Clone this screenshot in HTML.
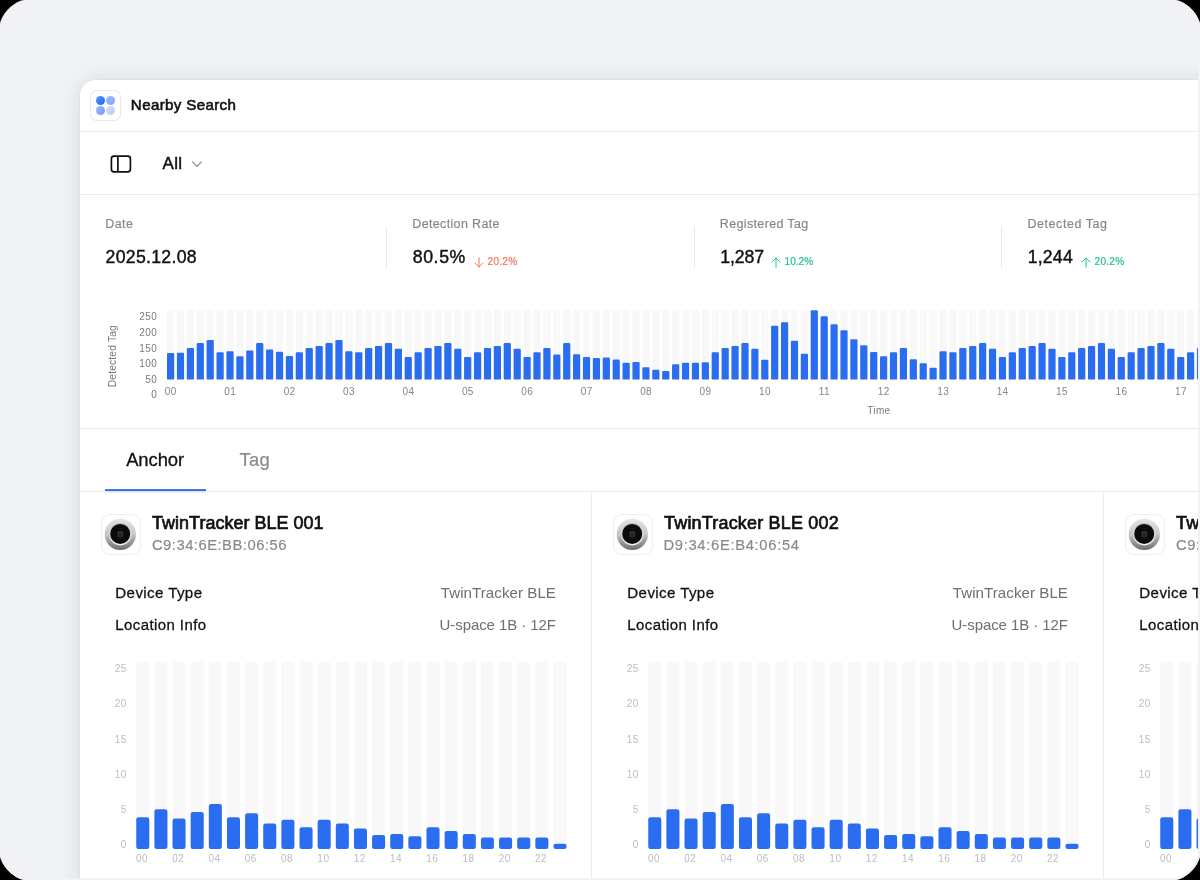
<!DOCTYPE html>
<html lang="en"><head><meta charset="utf-8"><title>Nearby Search</title>
<style>
html,body{margin:0;padding:0;background:#000;}
body{width:1200px;height:880px;overflow:hidden;font-family:"Liberation Sans",sans-serif;}
.frame{position:relative;width:1200px;height:880px;background:#f0f2f6;overflow:hidden;clip-path:polygon(0.00px 24.30px,0.20px 22.86px,0.78px 20.80px,1.75px 18.48px,3.06px 16.03px,4.69px 13.54px,6.61px 11.09px,8.76px 8.76px,11.09px 6.61px,13.54px 4.69px,16.03px 3.06px,18.48px 1.75px,20.80px 0.78px,22.86px 0.20px,24.30px 0.00px,1175.70px 0.00px,1177.14px 0.20px,1179.20px 0.78px,1181.52px 1.75px,1183.97px 3.06px,1186.46px 4.69px,1188.91px 6.61px,1191.24px 8.76px,1193.39px 11.09px,1195.31px 13.54px,1196.94px 16.03px,1198.25px 18.48px,1199.22px 20.80px,1199.80px 22.86px,1200.00px 24.30px,1200.00px 855.70px,1199.80px 857.14px,1199.22px 859.20px,1198.25px 861.52px,1196.94px 863.97px,1195.31px 866.46px,1193.39px 868.91px,1191.24px 871.24px,1188.91px 873.39px,1186.46px 875.31px,1183.97px 876.94px,1181.52px 878.25px,1179.20px 879.22px,1177.14px 879.80px,1175.70px 880.00px,24.30px 880.00px,22.86px 879.80px,20.80px 879.22px,18.48px 878.25px,16.03px 876.94px,13.54px 875.31px,11.09px 873.39px,8.76px 871.24px,6.61px 868.91px,4.69px 866.46px,3.06px 863.97px,1.75px 861.52px,0.78px 859.20px,0.20px 857.14px,0.00px 855.70px);}
.clip{position:absolute;left:0;top:0;width:1198px;height:878px;overflow:hidden;will-change:transform;}
.card{position:absolute;left:80px;top:80px;width:1140px;height:820px;background:#fff;border-radius:16px 0 0 0;box-shadow:0 0 0 1px rgba(20,25,40,.025),0 1px 22px rgba(20,25,40,.115);}
.t{position:absolute;white-space:nowrap;line-height:1;font-family:"Liberation Sans",sans-serif;}
.r{position:absolute;display:block;}
</style></head><body>
<div class="frame"><div class="clip">
<div class="card"></div>
<svg class="r" style="left:0;top:0" width="1198" height="878" viewBox="0 0 1198 878">
<defs><linearGradient id="rg" x1="0" y1="0" x2="0" y2="1"><stop offset="0" stop-color="#e6e6e6"/><stop offset="0.5" stop-color="#c6c6c6"/><stop offset="1" stop-color="#6c6c6c"/></linearGradient>
<linearGradient id="rh" x1="0" y1="0" x2="0" y2="1"><stop offset="0" stop-color="#c2c2c2"/><stop offset="1" stop-color="#f4f4f4"/></linearGradient></defs>
<rect x="167.00" y="310.30" width="7.20" height="69.30" rx="1.2" fill="#f8f8f9"/>
<rect x="167.00" y="353.03" width="7.20" height="26.57" rx="1.2" fill="#2b6df0"/>
<rect x="176.90" y="310.30" width="7.20" height="69.30" rx="1.2" fill="#f8f8f9"/>
<rect x="176.90" y="352.70" width="7.20" height="26.90" rx="1.2" fill="#2b6df0"/>
<rect x="186.81" y="310.30" width="7.20" height="69.30" rx="1.2" fill="#f8f8f9"/>
<rect x="186.81" y="348.03" width="7.20" height="31.57" rx="1.2" fill="#2b6df0"/>
<rect x="196.71" y="310.30" width="7.20" height="69.30" rx="1.2" fill="#f8f8f9"/>
<rect x="196.71" y="343.03" width="7.20" height="36.57" rx="1.2" fill="#2b6df0"/>
<rect x="206.61" y="310.30" width="7.20" height="69.30" rx="1.2" fill="#f8f8f9"/>
<rect x="206.61" y="340.03" width="7.20" height="39.57" rx="1.2" fill="#2b6df0"/>
<rect x="216.51" y="310.30" width="7.20" height="69.30" rx="1.2" fill="#f8f8f9"/>
<rect x="216.51" y="352.20" width="7.20" height="27.40" rx="1.2" fill="#2b6df0"/>
<rect x="226.42" y="310.30" width="7.20" height="69.30" rx="1.2" fill="#f8f8f9"/>
<rect x="226.42" y="351.37" width="7.20" height="28.23" rx="1.2" fill="#2b6df0"/>
<rect x="236.32" y="310.30" width="7.20" height="69.30" rx="1.2" fill="#f8f8f9"/>
<rect x="236.32" y="356.37" width="7.20" height="23.23" rx="1.2" fill="#2b6df0"/>
<rect x="246.22" y="310.30" width="7.20" height="69.30" rx="1.2" fill="#f8f8f9"/>
<rect x="246.22" y="350.53" width="7.20" height="29.07" rx="1.2" fill="#2b6df0"/>
<rect x="256.13" y="310.30" width="7.20" height="69.30" rx="1.2" fill="#f8f8f9"/>
<rect x="256.13" y="343.03" width="7.20" height="36.57" rx="1.2" fill="#2b6df0"/>
<rect x="266.03" y="310.30" width="7.20" height="69.30" rx="1.2" fill="#f8f8f9"/>
<rect x="266.03" y="349.53" width="7.20" height="30.07" rx="1.2" fill="#2b6df0"/>
<rect x="275.93" y="310.30" width="7.20" height="69.30" rx="1.2" fill="#f8f8f9"/>
<rect x="275.93" y="351.87" width="7.20" height="27.73" rx="1.2" fill="#2b6df0"/>
<rect x="285.84" y="310.30" width="7.20" height="69.30" rx="1.2" fill="#f8f8f9"/>
<rect x="285.84" y="356.03" width="7.20" height="23.57" rx="1.2" fill="#2b6df0"/>
<rect x="295.74" y="310.30" width="7.20" height="69.30" rx="1.2" fill="#f8f8f9"/>
<rect x="295.74" y="352.20" width="7.20" height="27.40" rx="1.2" fill="#2b6df0"/>
<rect x="305.64" y="310.30" width="7.20" height="69.30" rx="1.2" fill="#f8f8f9"/>
<rect x="305.64" y="348.03" width="7.20" height="31.57" rx="1.2" fill="#2b6df0"/>
<rect x="315.55" y="310.30" width="7.20" height="69.30" rx="1.2" fill="#f8f8f9"/>
<rect x="315.55" y="346.03" width="7.20" height="33.57" rx="1.2" fill="#2b6df0"/>
<rect x="325.45" y="310.30" width="7.20" height="69.30" rx="1.2" fill="#f8f8f9"/>
<rect x="325.45" y="343.03" width="7.20" height="36.57" rx="1.2" fill="#2b6df0"/>
<rect x="335.35" y="310.30" width="7.20" height="69.30" rx="1.2" fill="#f8f8f9"/>
<rect x="335.35" y="340.03" width="7.20" height="39.57" rx="1.2" fill="#2b6df0"/>
<rect x="345.25" y="310.30" width="7.20" height="69.30" rx="1.2" fill="#f8f8f9"/>
<rect x="345.25" y="351.37" width="7.20" height="28.23" rx="1.2" fill="#2b6df0"/>
<rect x="355.16" y="310.30" width="7.20" height="69.30" rx="1.2" fill="#f8f8f9"/>
<rect x="355.16" y="352.20" width="7.20" height="27.40" rx="1.2" fill="#2b6df0"/>
<rect x="365.06" y="310.30" width="7.20" height="69.30" rx="1.2" fill="#f8f8f9"/>
<rect x="365.06" y="348.03" width="7.20" height="31.57" rx="1.2" fill="#2b6df0"/>
<rect x="374.96" y="310.30" width="7.20" height="69.30" rx="1.2" fill="#f8f8f9"/>
<rect x="374.96" y="346.03" width="7.20" height="33.57" rx="1.2" fill="#2b6df0"/>
<rect x="384.87" y="310.30" width="7.20" height="69.30" rx="1.2" fill="#f8f8f9"/>
<rect x="384.87" y="343.03" width="7.20" height="36.57" rx="1.2" fill="#2b6df0"/>
<rect x="394.77" y="310.30" width="7.20" height="69.30" rx="1.2" fill="#f8f8f9"/>
<rect x="394.77" y="348.70" width="7.20" height="30.90" rx="1.2" fill="#2b6df0"/>
<rect x="404.67" y="310.30" width="7.20" height="69.30" rx="1.2" fill="#f8f8f9"/>
<rect x="404.67" y="357.03" width="7.20" height="22.57" rx="1.2" fill="#2b6df0"/>
<rect x="414.58" y="310.30" width="7.20" height="69.30" rx="1.2" fill="#f8f8f9"/>
<rect x="414.58" y="352.20" width="7.20" height="27.40" rx="1.2" fill="#2b6df0"/>
<rect x="424.48" y="310.30" width="7.20" height="69.30" rx="1.2" fill="#f8f8f9"/>
<rect x="424.48" y="348.03" width="7.20" height="31.57" rx="1.2" fill="#2b6df0"/>
<rect x="434.38" y="310.30" width="7.20" height="69.30" rx="1.2" fill="#f8f8f9"/>
<rect x="434.38" y="346.03" width="7.20" height="33.57" rx="1.2" fill="#2b6df0"/>
<rect x="444.28" y="310.30" width="7.20" height="69.30" rx="1.2" fill="#f8f8f9"/>
<rect x="444.28" y="343.03" width="7.20" height="36.57" rx="1.2" fill="#2b6df0"/>
<rect x="454.19" y="310.30" width="7.20" height="69.30" rx="1.2" fill="#f8f8f9"/>
<rect x="454.19" y="348.70" width="7.20" height="30.90" rx="1.2" fill="#2b6df0"/>
<rect x="464.09" y="310.30" width="7.20" height="69.30" rx="1.2" fill="#f8f8f9"/>
<rect x="464.09" y="357.03" width="7.20" height="22.57" rx="1.2" fill="#2b6df0"/>
<rect x="473.99" y="310.30" width="7.20" height="69.30" rx="1.2" fill="#f8f8f9"/>
<rect x="473.99" y="352.20" width="7.20" height="27.40" rx="1.2" fill="#2b6df0"/>
<rect x="483.90" y="310.30" width="7.20" height="69.30" rx="1.2" fill="#f8f8f9"/>
<rect x="483.90" y="348.03" width="7.20" height="31.57" rx="1.2" fill="#2b6df0"/>
<rect x="493.80" y="310.30" width="7.20" height="69.30" rx="1.2" fill="#f8f8f9"/>
<rect x="493.80" y="346.03" width="7.20" height="33.57" rx="1.2" fill="#2b6df0"/>
<rect x="503.70" y="310.30" width="7.20" height="69.30" rx="1.2" fill="#f8f8f9"/>
<rect x="503.70" y="343.03" width="7.20" height="36.57" rx="1.2" fill="#2b6df0"/>
<rect x="513.61" y="310.30" width="7.20" height="69.30" rx="1.2" fill="#f8f8f9"/>
<rect x="513.61" y="348.70" width="7.20" height="30.90" rx="1.2" fill="#2b6df0"/>
<rect x="523.51" y="310.30" width="7.20" height="69.30" rx="1.2" fill="#f8f8f9"/>
<rect x="523.51" y="357.03" width="7.20" height="22.57" rx="1.2" fill="#2b6df0"/>
<rect x="533.41" y="310.30" width="7.20" height="69.30" rx="1.2" fill="#f8f8f9"/>
<rect x="533.41" y="352.20" width="7.20" height="27.40" rx="1.2" fill="#2b6df0"/>
<rect x="543.31" y="310.30" width="7.20" height="69.30" rx="1.2" fill="#f8f8f9"/>
<rect x="543.31" y="348.03" width="7.20" height="31.57" rx="1.2" fill="#2b6df0"/>
<rect x="553.22" y="310.30" width="7.20" height="69.30" rx="1.2" fill="#f8f8f9"/>
<rect x="553.22" y="354.53" width="7.20" height="25.07" rx="1.2" fill="#2b6df0"/>
<rect x="563.12" y="310.30" width="7.20" height="69.30" rx="1.2" fill="#f8f8f9"/>
<rect x="563.12" y="343.03" width="7.20" height="36.57" rx="1.2" fill="#2b6df0"/>
<rect x="573.02" y="310.30" width="7.20" height="69.30" rx="1.2" fill="#f8f8f9"/>
<rect x="573.02" y="354.20" width="7.20" height="25.40" rx="1.2" fill="#2b6df0"/>
<rect x="582.93" y="310.30" width="7.20" height="69.30" rx="1.2" fill="#f8f8f9"/>
<rect x="582.93" y="357.03" width="7.20" height="22.57" rx="1.2" fill="#2b6df0"/>
<rect x="592.83" y="310.30" width="7.20" height="69.30" rx="1.2" fill="#f8f8f9"/>
<rect x="592.83" y="358.03" width="7.20" height="21.57" rx="1.2" fill="#2b6df0"/>
<rect x="602.73" y="310.30" width="7.20" height="69.30" rx="1.2" fill="#f8f8f9"/>
<rect x="602.73" y="357.53" width="7.20" height="22.07" rx="1.2" fill="#2b6df0"/>
<rect x="612.63" y="310.30" width="7.20" height="69.30" rx="1.2" fill="#f8f8f9"/>
<rect x="612.63" y="359.53" width="7.20" height="20.07" rx="1.2" fill="#2b6df0"/>
<rect x="622.54" y="310.30" width="7.20" height="69.30" rx="1.2" fill="#f8f8f9"/>
<rect x="622.54" y="362.70" width="7.20" height="16.90" rx="1.2" fill="#2b6df0"/>
<rect x="632.44" y="310.30" width="7.20" height="69.30" rx="1.2" fill="#f8f8f9"/>
<rect x="632.44" y="362.03" width="7.20" height="17.57" rx="1.2" fill="#2b6df0"/>
<rect x="642.34" y="310.30" width="7.20" height="69.30" rx="1.2" fill="#f8f8f9"/>
<rect x="642.34" y="367.20" width="7.20" height="12.40" rx="1.2" fill="#2b6df0"/>
<rect x="652.25" y="310.30" width="7.20" height="69.30" rx="1.2" fill="#f8f8f9"/>
<rect x="652.25" y="369.70" width="7.20" height="9.90" rx="1.2" fill="#2b6df0"/>
<rect x="662.15" y="310.30" width="7.20" height="69.30" rx="1.2" fill="#f8f8f9"/>
<rect x="662.15" y="371.03" width="7.20" height="8.57" rx="1.2" fill="#2b6df0"/>
<rect x="672.05" y="310.30" width="7.20" height="69.30" rx="1.2" fill="#f8f8f9"/>
<rect x="672.05" y="364.20" width="7.20" height="15.40" rx="1.2" fill="#2b6df0"/>
<rect x="681.96" y="310.30" width="7.20" height="69.30" rx="1.2" fill="#f8f8f9"/>
<rect x="681.96" y="362.70" width="7.20" height="16.90" rx="1.2" fill="#2b6df0"/>
<rect x="691.86" y="310.30" width="7.20" height="69.30" rx="1.2" fill="#f8f8f9"/>
<rect x="691.86" y="362.70" width="7.20" height="16.90" rx="1.2" fill="#2b6df0"/>
<rect x="701.76" y="310.30" width="7.20" height="69.30" rx="1.2" fill="#f8f8f9"/>
<rect x="701.76" y="362.20" width="7.20" height="17.40" rx="1.2" fill="#2b6df0"/>
<rect x="711.67" y="310.30" width="7.20" height="69.30" rx="1.2" fill="#f8f8f9"/>
<rect x="711.67" y="352.20" width="7.20" height="27.40" rx="1.2" fill="#2b6df0"/>
<rect x="721.57" y="310.30" width="7.20" height="69.30" rx="1.2" fill="#f8f8f9"/>
<rect x="721.57" y="348.03" width="7.20" height="31.57" rx="1.2" fill="#2b6df0"/>
<rect x="731.47" y="310.30" width="7.20" height="69.30" rx="1.2" fill="#f8f8f9"/>
<rect x="731.47" y="346.03" width="7.20" height="33.57" rx="1.2" fill="#2b6df0"/>
<rect x="741.37" y="310.30" width="7.20" height="69.30" rx="1.2" fill="#f8f8f9"/>
<rect x="741.37" y="343.03" width="7.20" height="36.57" rx="1.2" fill="#2b6df0"/>
<rect x="751.28" y="310.30" width="7.20" height="69.30" rx="1.2" fill="#f8f8f9"/>
<rect x="751.28" y="348.70" width="7.20" height="30.90" rx="1.2" fill="#2b6df0"/>
<rect x="761.18" y="310.30" width="7.20" height="69.30" rx="1.2" fill="#f8f8f9"/>
<rect x="761.18" y="359.70" width="7.20" height="19.90" rx="1.2" fill="#2b6df0"/>
<rect x="771.08" y="310.30" width="7.20" height="69.30" rx="1.2" fill="#f8f8f9"/>
<rect x="771.08" y="325.70" width="7.20" height="53.90" rx="1.2" fill="#2b6df0"/>
<rect x="780.99" y="310.30" width="7.20" height="69.30" rx="1.2" fill="#f8f8f9"/>
<rect x="780.99" y="322.20" width="7.20" height="57.40" rx="1.2" fill="#2b6df0"/>
<rect x="790.89" y="310.30" width="7.20" height="69.30" rx="1.2" fill="#f8f8f9"/>
<rect x="790.89" y="340.87" width="7.20" height="38.73" rx="1.2" fill="#2b6df0"/>
<rect x="800.79" y="310.30" width="7.20" height="69.30" rx="1.2" fill="#f8f8f9"/>
<rect x="800.79" y="353.70" width="7.20" height="25.90" rx="1.2" fill="#2b6df0"/>
<rect x="810.70" y="310.30" width="7.20" height="69.30" rx="1.2" fill="#f8f8f9"/>
<rect x="810.70" y="310.37" width="7.20" height="69.23" rx="1.2" fill="#2b6df0"/>
<rect x="820.60" y="310.30" width="7.20" height="69.30" rx="1.2" fill="#f8f8f9"/>
<rect x="820.60" y="316.20" width="7.20" height="63.40" rx="1.2" fill="#2b6df0"/>
<rect x="830.50" y="310.30" width="7.20" height="69.30" rx="1.2" fill="#f8f8f9"/>
<rect x="830.50" y="324.37" width="7.20" height="55.23" rx="1.2" fill="#2b6df0"/>
<rect x="840.40" y="310.30" width="7.20" height="69.30" rx="1.2" fill="#f8f8f9"/>
<rect x="840.40" y="330.37" width="7.20" height="49.23" rx="1.2" fill="#2b6df0"/>
<rect x="850.31" y="310.30" width="7.20" height="69.30" rx="1.2" fill="#f8f8f9"/>
<rect x="850.31" y="339.37" width="7.20" height="40.23" rx="1.2" fill="#2b6df0"/>
<rect x="860.21" y="310.30" width="7.20" height="69.30" rx="1.2" fill="#f8f8f9"/>
<rect x="860.21" y="345.20" width="7.20" height="34.40" rx="1.2" fill="#2b6df0"/>
<rect x="870.11" y="310.30" width="7.20" height="69.30" rx="1.2" fill="#f8f8f9"/>
<rect x="870.11" y="352.03" width="7.20" height="27.57" rx="1.2" fill="#2b6df0"/>
<rect x="880.02" y="310.30" width="7.20" height="69.30" rx="1.2" fill="#f8f8f9"/>
<rect x="880.02" y="356.20" width="7.20" height="23.40" rx="1.2" fill="#2b6df0"/>
<rect x="889.92" y="310.30" width="7.20" height="69.30" rx="1.2" fill="#f8f8f9"/>
<rect x="889.92" y="352.20" width="7.20" height="27.40" rx="1.2" fill="#2b6df0"/>
<rect x="899.82" y="310.30" width="7.20" height="69.30" rx="1.2" fill="#f8f8f9"/>
<rect x="899.82" y="348.03" width="7.20" height="31.57" rx="1.2" fill="#2b6df0"/>
<rect x="909.73" y="310.30" width="7.20" height="69.30" rx="1.2" fill="#f8f8f9"/>
<rect x="909.73" y="359.37" width="7.20" height="20.23" rx="1.2" fill="#2b6df0"/>
<rect x="919.63" y="310.30" width="7.20" height="69.30" rx="1.2" fill="#f8f8f9"/>
<rect x="919.63" y="363.20" width="7.20" height="16.40" rx="1.2" fill="#2b6df0"/>
<rect x="929.53" y="310.30" width="7.20" height="69.30" rx="1.2" fill="#f8f8f9"/>
<rect x="929.53" y="367.70" width="7.20" height="11.90" rx="1.2" fill="#2b6df0"/>
<rect x="939.43" y="310.30" width="7.20" height="69.30" rx="1.2" fill="#f8f8f9"/>
<rect x="939.43" y="351.37" width="7.20" height="28.23" rx="1.2" fill="#2b6df0"/>
<rect x="949.34" y="310.30" width="7.20" height="69.30" rx="1.2" fill="#f8f8f9"/>
<rect x="949.34" y="352.20" width="7.20" height="27.40" rx="1.2" fill="#2b6df0"/>
<rect x="959.24" y="310.30" width="7.20" height="69.30" rx="1.2" fill="#f8f8f9"/>
<rect x="959.24" y="348.03" width="7.20" height="31.57" rx="1.2" fill="#2b6df0"/>
<rect x="969.14" y="310.30" width="7.20" height="69.30" rx="1.2" fill="#f8f8f9"/>
<rect x="969.14" y="346.03" width="7.20" height="33.57" rx="1.2" fill="#2b6df0"/>
<rect x="979.05" y="310.30" width="7.20" height="69.30" rx="1.2" fill="#f8f8f9"/>
<rect x="979.05" y="343.03" width="7.20" height="36.57" rx="1.2" fill="#2b6df0"/>
<rect x="988.95" y="310.30" width="7.20" height="69.30" rx="1.2" fill="#f8f8f9"/>
<rect x="988.95" y="348.70" width="7.20" height="30.90" rx="1.2" fill="#2b6df0"/>
<rect x="998.85" y="310.30" width="7.20" height="69.30" rx="1.2" fill="#f8f8f9"/>
<rect x="998.85" y="357.03" width="7.20" height="22.57" rx="1.2" fill="#2b6df0"/>
<rect x="1008.75" y="310.30" width="7.20" height="69.30" rx="1.2" fill="#f8f8f9"/>
<rect x="1008.75" y="352.20" width="7.20" height="27.40" rx="1.2" fill="#2b6df0"/>
<rect x="1018.66" y="310.30" width="7.20" height="69.30" rx="1.2" fill="#f8f8f9"/>
<rect x="1018.66" y="348.03" width="7.20" height="31.57" rx="1.2" fill="#2b6df0"/>
<rect x="1028.56" y="310.30" width="7.20" height="69.30" rx="1.2" fill="#f8f8f9"/>
<rect x="1028.56" y="346.03" width="7.20" height="33.57" rx="1.2" fill="#2b6df0"/>
<rect x="1038.46" y="310.30" width="7.20" height="69.30" rx="1.2" fill="#f8f8f9"/>
<rect x="1038.46" y="343.03" width="7.20" height="36.57" rx="1.2" fill="#2b6df0"/>
<rect x="1048.37" y="310.30" width="7.20" height="69.30" rx="1.2" fill="#f8f8f9"/>
<rect x="1048.37" y="348.70" width="7.20" height="30.90" rx="1.2" fill="#2b6df0"/>
<rect x="1058.27" y="310.30" width="7.20" height="69.30" rx="1.2" fill="#f8f8f9"/>
<rect x="1058.27" y="357.03" width="7.20" height="22.57" rx="1.2" fill="#2b6df0"/>
<rect x="1068.17" y="310.30" width="7.20" height="69.30" rx="1.2" fill="#f8f8f9"/>
<rect x="1068.17" y="352.20" width="7.20" height="27.40" rx="1.2" fill="#2b6df0"/>
<rect x="1078.08" y="310.30" width="7.20" height="69.30" rx="1.2" fill="#f8f8f9"/>
<rect x="1078.08" y="348.03" width="7.20" height="31.57" rx="1.2" fill="#2b6df0"/>
<rect x="1087.98" y="310.30" width="7.20" height="69.30" rx="1.2" fill="#f8f8f9"/>
<rect x="1087.98" y="346.03" width="7.20" height="33.57" rx="1.2" fill="#2b6df0"/>
<rect x="1097.88" y="310.30" width="7.20" height="69.30" rx="1.2" fill="#f8f8f9"/>
<rect x="1097.88" y="343.03" width="7.20" height="36.57" rx="1.2" fill="#2b6df0"/>
<rect x="1107.79" y="310.30" width="7.20" height="69.30" rx="1.2" fill="#f8f8f9"/>
<rect x="1107.79" y="348.70" width="7.20" height="30.90" rx="1.2" fill="#2b6df0"/>
<rect x="1117.69" y="310.30" width="7.20" height="69.30" rx="1.2" fill="#f8f8f9"/>
<rect x="1117.69" y="357.03" width="7.20" height="22.57" rx="1.2" fill="#2b6df0"/>
<rect x="1127.59" y="310.30" width="7.20" height="69.30" rx="1.2" fill="#f8f8f9"/>
<rect x="1127.59" y="352.20" width="7.20" height="27.40" rx="1.2" fill="#2b6df0"/>
<rect x="1137.49" y="310.30" width="7.20" height="69.30" rx="1.2" fill="#f8f8f9"/>
<rect x="1137.49" y="348.03" width="7.20" height="31.57" rx="1.2" fill="#2b6df0"/>
<rect x="1147.40" y="310.30" width="7.20" height="69.30" rx="1.2" fill="#f8f8f9"/>
<rect x="1147.40" y="346.03" width="7.20" height="33.57" rx="1.2" fill="#2b6df0"/>
<rect x="1157.30" y="310.30" width="7.20" height="69.30" rx="1.2" fill="#f8f8f9"/>
<rect x="1157.30" y="343.03" width="7.20" height="36.57" rx="1.2" fill="#2b6df0"/>
<rect x="1167.20" y="310.30" width="7.20" height="69.30" rx="1.2" fill="#f8f8f9"/>
<rect x="1167.20" y="348.70" width="7.20" height="30.90" rx="1.2" fill="#2b6df0"/>
<rect x="1177.11" y="310.30" width="7.20" height="69.30" rx="1.2" fill="#f8f8f9"/>
<rect x="1177.11" y="357.03" width="7.20" height="22.57" rx="1.2" fill="#2b6df0"/>
<rect x="1187.01" y="310.30" width="7.20" height="69.30" rx="1.2" fill="#f8f8f9"/>
<rect x="1187.01" y="352.20" width="7.20" height="27.40" rx="1.2" fill="#2b6df0"/>
<rect x="1196.91" y="310.30" width="7.20" height="69.30" rx="1.2" fill="#f8f8f9"/>
<rect x="1196.91" y="348.03" width="7.20" height="31.57" rx="1.2" fill="#2b6df0"/>
<rect x="1206.82" y="310.30" width="7.20" height="69.30" rx="1.2" fill="#f8f8f9"/>
<rect x="1206.82" y="346.03" width="7.20" height="33.57" rx="1.2" fill="#2b6df0"/>
<rect x="1216.72" y="310.30" width="7.20" height="69.30" rx="1.2" fill="#f8f8f9"/>
<rect x="1216.72" y="343.03" width="7.20" height="36.57" rx="1.2" fill="#2b6df0"/>
<rect x="1226.62" y="310.30" width="7.20" height="69.30" rx="1.2" fill="#f8f8f9"/>
<rect x="1226.62" y="348.70" width="7.20" height="30.90" rx="1.2" fill="#2b6df0"/>
<rect x="105.00" y="489.20" width="101.00" height="2.90" rx="0" fill="#2467ee"/>
<g transform="translate(0,0)">
<rect x="101.4" y="514.6" width="39" height="39.8" rx="8.5" fill="#fff" stroke="#ededee" stroke-width="1"/>
<circle cx="120.3" cy="534.4" r="15.6" fill="url(#rg)"/>
<circle cx="120.3" cy="534.1" r="11.3" fill="url(#rh)"/>
<circle cx="120.2" cy="533.9" r="10" fill="#0b0b0c"/>
<rect x="117.7" y="531.4" width="5.2" height="5.4" rx="0.5" fill="#3b3b3b"/>
<rect x="118.9" y="533.2" width="2.8" height="2.4" fill="#161616"/>
<rect x="119.2" y="528.4" width="2" height="0.8" fill="#222"/>
<rect x="118.6" y="538.4" width="3.2" height="0.8" fill="#222"/>
</g>
<rect x="136.25" y="662.10" width="13.05" height="187.00" rx="2.3" fill="#f8f8f9"/>
<rect x="136.25" y="817.20" width="13.05" height="31.90" rx="2.3" fill="#2b6df0"/>
<rect x="154.39" y="662.10" width="13.05" height="187.00" rx="2.3" fill="#f8f8f9"/>
<rect x="154.39" y="809.30" width="13.05" height="39.80" rx="2.3" fill="#2b6df0"/>
<rect x="172.53" y="662.10" width="13.05" height="187.00" rx="2.3" fill="#f8f8f9"/>
<rect x="172.53" y="818.50" width="13.05" height="30.60" rx="2.3" fill="#2b6df0"/>
<rect x="190.67" y="662.10" width="13.05" height="187.00" rx="2.3" fill="#f8f8f9"/>
<rect x="190.67" y="811.90" width="13.05" height="37.20" rx="2.3" fill="#2b6df0"/>
<rect x="208.81" y="662.10" width="13.05" height="187.00" rx="2.3" fill="#f8f8f9"/>
<rect x="208.81" y="804.10" width="13.05" height="45.00" rx="2.3" fill="#2b6df0"/>
<rect x="226.95" y="662.10" width="13.05" height="187.00" rx="2.3" fill="#f8f8f9"/>
<rect x="226.95" y="817.20" width="13.05" height="31.90" rx="2.3" fill="#2b6df0"/>
<rect x="245.09" y="662.10" width="13.05" height="187.00" rx="2.3" fill="#f8f8f9"/>
<rect x="245.09" y="813.20" width="13.05" height="35.90" rx="2.3" fill="#2b6df0"/>
<rect x="263.23" y="662.10" width="13.05" height="187.00" rx="2.3" fill="#f8f8f9"/>
<rect x="263.23" y="823.40" width="13.05" height="25.70" rx="2.3" fill="#2b6df0"/>
<rect x="281.37" y="662.10" width="13.05" height="187.00" rx="2.3" fill="#f8f8f9"/>
<rect x="281.37" y="819.80" width="13.05" height="29.30" rx="2.3" fill="#2b6df0"/>
<rect x="299.51" y="662.10" width="13.05" height="187.00" rx="2.3" fill="#f8f8f9"/>
<rect x="299.51" y="827.30" width="13.05" height="21.80" rx="2.3" fill="#2b6df0"/>
<rect x="317.65" y="662.10" width="13.05" height="187.00" rx="2.3" fill="#f8f8f9"/>
<rect x="317.65" y="819.80" width="13.05" height="29.30" rx="2.3" fill="#2b6df0"/>
<rect x="335.79" y="662.10" width="13.05" height="187.00" rx="2.3" fill="#f8f8f9"/>
<rect x="335.79" y="823.40" width="13.05" height="25.70" rx="2.3" fill="#2b6df0"/>
<rect x="353.93" y="662.10" width="13.05" height="187.00" rx="2.3" fill="#f8f8f9"/>
<rect x="353.93" y="828.60" width="13.05" height="20.50" rx="2.3" fill="#2b6df0"/>
<rect x="372.07" y="662.10" width="13.05" height="187.00" rx="2.3" fill="#f8f8f9"/>
<rect x="372.07" y="834.90" width="13.05" height="14.20" rx="2.3" fill="#2b6df0"/>
<rect x="390.21" y="662.10" width="13.05" height="187.00" rx="2.3" fill="#f8f8f9"/>
<rect x="390.21" y="833.90" width="13.05" height="15.20" rx="2.3" fill="#2b6df0"/>
<rect x="408.35" y="662.10" width="13.05" height="187.00" rx="2.3" fill="#f8f8f9"/>
<rect x="408.35" y="836.20" width="13.05" height="12.90" rx="2.3" fill="#2b6df0"/>
<rect x="426.49" y="662.10" width="13.05" height="187.00" rx="2.3" fill="#f8f8f9"/>
<rect x="426.49" y="827.30" width="13.05" height="21.80" rx="2.3" fill="#2b6df0"/>
<rect x="444.63" y="662.10" width="13.05" height="187.00" rx="2.3" fill="#f8f8f9"/>
<rect x="444.63" y="831.00" width="13.05" height="18.10" rx="2.3" fill="#2b6df0"/>
<rect x="462.77" y="662.10" width="13.05" height="187.00" rx="2.3" fill="#f8f8f9"/>
<rect x="462.77" y="833.90" width="13.05" height="15.20" rx="2.3" fill="#2b6df0"/>
<rect x="480.91" y="662.10" width="13.05" height="187.00" rx="2.3" fill="#f8f8f9"/>
<rect x="480.91" y="837.50" width="13.05" height="11.60" rx="2.3" fill="#2b6df0"/>
<rect x="499.05" y="662.10" width="13.05" height="187.00" rx="2.3" fill="#f8f8f9"/>
<rect x="499.05" y="837.50" width="13.05" height="11.60" rx="2.3" fill="#2b6df0"/>
<rect x="517.19" y="662.10" width="13.05" height="187.00" rx="2.3" fill="#f8f8f9"/>
<rect x="517.19" y="837.50" width="13.05" height="11.60" rx="2.3" fill="#2b6df0"/>
<rect x="535.33" y="662.10" width="13.05" height="187.00" rx="2.3" fill="#f8f8f9"/>
<rect x="535.33" y="837.50" width="13.05" height="11.60" rx="2.3" fill="#2b6df0"/>
<rect x="553.47" y="662.10" width="13.05" height="187.00" rx="2.3" fill="#f8f8f9"/>
<rect x="553.47" y="843.80" width="13.05" height="5.30" rx="2.3" fill="#2b6df0"/>
<g transform="translate(512,0)">
<rect x="101.4" y="514.6" width="39" height="39.8" rx="8.5" fill="#fff" stroke="#ededee" stroke-width="1"/>
<circle cx="120.3" cy="534.4" r="15.6" fill="url(#rg)"/>
<circle cx="120.3" cy="534.1" r="11.3" fill="url(#rh)"/>
<circle cx="120.2" cy="533.9" r="10" fill="#0b0b0c"/>
<rect x="117.7" y="531.4" width="5.2" height="5.4" rx="0.5" fill="#3b3b3b"/>
<rect x="118.9" y="533.2" width="2.8" height="2.4" fill="#161616"/>
<rect x="119.2" y="528.4" width="2" height="0.8" fill="#222"/>
<rect x="118.6" y="538.4" width="3.2" height="0.8" fill="#222"/>
</g>
<rect x="648.25" y="662.10" width="13.05" height="187.00" rx="2.3" fill="#f8f8f9"/>
<rect x="648.25" y="817.20" width="13.05" height="31.90" rx="2.3" fill="#2b6df0"/>
<rect x="666.39" y="662.10" width="13.05" height="187.00" rx="2.3" fill="#f8f8f9"/>
<rect x="666.39" y="809.30" width="13.05" height="39.80" rx="2.3" fill="#2b6df0"/>
<rect x="684.53" y="662.10" width="13.05" height="187.00" rx="2.3" fill="#f8f8f9"/>
<rect x="684.53" y="818.50" width="13.05" height="30.60" rx="2.3" fill="#2b6df0"/>
<rect x="702.67" y="662.10" width="13.05" height="187.00" rx="2.3" fill="#f8f8f9"/>
<rect x="702.67" y="811.90" width="13.05" height="37.20" rx="2.3" fill="#2b6df0"/>
<rect x="720.81" y="662.10" width="13.05" height="187.00" rx="2.3" fill="#f8f8f9"/>
<rect x="720.81" y="804.10" width="13.05" height="45.00" rx="2.3" fill="#2b6df0"/>
<rect x="738.95" y="662.10" width="13.05" height="187.00" rx="2.3" fill="#f8f8f9"/>
<rect x="738.95" y="817.20" width="13.05" height="31.90" rx="2.3" fill="#2b6df0"/>
<rect x="757.09" y="662.10" width="13.05" height="187.00" rx="2.3" fill="#f8f8f9"/>
<rect x="757.09" y="813.20" width="13.05" height="35.90" rx="2.3" fill="#2b6df0"/>
<rect x="775.23" y="662.10" width="13.05" height="187.00" rx="2.3" fill="#f8f8f9"/>
<rect x="775.23" y="823.40" width="13.05" height="25.70" rx="2.3" fill="#2b6df0"/>
<rect x="793.37" y="662.10" width="13.05" height="187.00" rx="2.3" fill="#f8f8f9"/>
<rect x="793.37" y="819.80" width="13.05" height="29.30" rx="2.3" fill="#2b6df0"/>
<rect x="811.51" y="662.10" width="13.05" height="187.00" rx="2.3" fill="#f8f8f9"/>
<rect x="811.51" y="827.30" width="13.05" height="21.80" rx="2.3" fill="#2b6df0"/>
<rect x="829.65" y="662.10" width="13.05" height="187.00" rx="2.3" fill="#f8f8f9"/>
<rect x="829.65" y="819.80" width="13.05" height="29.30" rx="2.3" fill="#2b6df0"/>
<rect x="847.79" y="662.10" width="13.05" height="187.00" rx="2.3" fill="#f8f8f9"/>
<rect x="847.79" y="823.40" width="13.05" height="25.70" rx="2.3" fill="#2b6df0"/>
<rect x="865.93" y="662.10" width="13.05" height="187.00" rx="2.3" fill="#f8f8f9"/>
<rect x="865.93" y="828.60" width="13.05" height="20.50" rx="2.3" fill="#2b6df0"/>
<rect x="884.07" y="662.10" width="13.05" height="187.00" rx="2.3" fill="#f8f8f9"/>
<rect x="884.07" y="834.90" width="13.05" height="14.20" rx="2.3" fill="#2b6df0"/>
<rect x="902.21" y="662.10" width="13.05" height="187.00" rx="2.3" fill="#f8f8f9"/>
<rect x="902.21" y="833.90" width="13.05" height="15.20" rx="2.3" fill="#2b6df0"/>
<rect x="920.35" y="662.10" width="13.05" height="187.00" rx="2.3" fill="#f8f8f9"/>
<rect x="920.35" y="836.20" width="13.05" height="12.90" rx="2.3" fill="#2b6df0"/>
<rect x="938.49" y="662.10" width="13.05" height="187.00" rx="2.3" fill="#f8f8f9"/>
<rect x="938.49" y="827.30" width="13.05" height="21.80" rx="2.3" fill="#2b6df0"/>
<rect x="956.63" y="662.10" width="13.05" height="187.00" rx="2.3" fill="#f8f8f9"/>
<rect x="956.63" y="831.00" width="13.05" height="18.10" rx="2.3" fill="#2b6df0"/>
<rect x="974.77" y="662.10" width="13.05" height="187.00" rx="2.3" fill="#f8f8f9"/>
<rect x="974.77" y="833.90" width="13.05" height="15.20" rx="2.3" fill="#2b6df0"/>
<rect x="992.91" y="662.10" width="13.05" height="187.00" rx="2.3" fill="#f8f8f9"/>
<rect x="992.91" y="837.50" width="13.05" height="11.60" rx="2.3" fill="#2b6df0"/>
<rect x="1011.05" y="662.10" width="13.05" height="187.00" rx="2.3" fill="#f8f8f9"/>
<rect x="1011.05" y="837.50" width="13.05" height="11.60" rx="2.3" fill="#2b6df0"/>
<rect x="1029.19" y="662.10" width="13.05" height="187.00" rx="2.3" fill="#f8f8f9"/>
<rect x="1029.19" y="837.50" width="13.05" height="11.60" rx="2.3" fill="#2b6df0"/>
<rect x="1047.33" y="662.10" width="13.05" height="187.00" rx="2.3" fill="#f8f8f9"/>
<rect x="1047.33" y="837.50" width="13.05" height="11.60" rx="2.3" fill="#2b6df0"/>
<rect x="1065.47" y="662.10" width="13.05" height="187.00" rx="2.3" fill="#f8f8f9"/>
<rect x="1065.47" y="843.80" width="13.05" height="5.30" rx="2.3" fill="#2b6df0"/>
<g transform="translate(1024,0)">
<rect x="101.4" y="514.6" width="39" height="39.8" rx="8.5" fill="#fff" stroke="#ededee" stroke-width="1"/>
<circle cx="120.3" cy="534.4" r="15.6" fill="url(#rg)"/>
<circle cx="120.3" cy="534.1" r="11.3" fill="url(#rh)"/>
<circle cx="120.2" cy="533.9" r="10" fill="#0b0b0c"/>
<rect x="117.7" y="531.4" width="5.2" height="5.4" rx="0.5" fill="#3b3b3b"/>
<rect x="118.9" y="533.2" width="2.8" height="2.4" fill="#161616"/>
<rect x="119.2" y="528.4" width="2" height="0.8" fill="#222"/>
<rect x="118.6" y="538.4" width="3.2" height="0.8" fill="#222"/>
</g>
<rect x="1160.25" y="662.10" width="13.05" height="187.00" rx="2.3" fill="#f8f8f9"/>
<rect x="1160.25" y="817.20" width="13.05" height="31.90" rx="2.3" fill="#2b6df0"/>
<rect x="1178.39" y="662.10" width="13.05" height="187.00" rx="2.3" fill="#f8f8f9"/>
<rect x="1178.39" y="809.30" width="13.05" height="39.80" rx="2.3" fill="#2b6df0"/>
<rect x="1196.53" y="662.10" width="13.05" height="187.00" rx="2.3" fill="#f8f8f9"/>
<rect x="1196.53" y="818.50" width="13.05" height="30.60" rx="2.3" fill="#2b6df0"/>
<rect x="1214.67" y="662.10" width="13.05" height="187.00" rx="2.3" fill="#f8f8f9"/>
<rect x="1214.67" y="811.90" width="13.05" height="37.20" rx="2.3" fill="#2b6df0"/>
<rect x="1232.81" y="662.10" width="13.05" height="187.00" rx="2.3" fill="#f8f8f9"/>
<rect x="1232.81" y="804.10" width="13.05" height="45.00" rx="2.3" fill="#2b6df0"/>
<rect x="1250.95" y="662.10" width="13.05" height="187.00" rx="2.3" fill="#f8f8f9"/>
<rect x="1250.95" y="817.20" width="13.05" height="31.90" rx="2.3" fill="#2b6df0"/>
<rect x="1269.09" y="662.10" width="13.05" height="187.00" rx="2.3" fill="#f8f8f9"/>
<rect x="1269.09" y="813.20" width="13.05" height="35.90" rx="2.3" fill="#2b6df0"/>
<rect x="1287.23" y="662.10" width="13.05" height="187.00" rx="2.3" fill="#f8f8f9"/>
<rect x="1287.23" y="823.40" width="13.05" height="25.70" rx="2.3" fill="#2b6df0"/>
<rect x="1305.37" y="662.10" width="13.05" height="187.00" rx="2.3" fill="#f8f8f9"/>
<rect x="1305.37" y="819.80" width="13.05" height="29.30" rx="2.3" fill="#2b6df0"/>
<rect x="1323.51" y="662.10" width="13.05" height="187.00" rx="2.3" fill="#f8f8f9"/>
<rect x="1323.51" y="827.30" width="13.05" height="21.80" rx="2.3" fill="#2b6df0"/>
<rect x="1341.65" y="662.10" width="13.05" height="187.00" rx="2.3" fill="#f8f8f9"/>
<rect x="1341.65" y="819.80" width="13.05" height="29.30" rx="2.3" fill="#2b6df0"/>
<rect x="1359.79" y="662.10" width="13.05" height="187.00" rx="2.3" fill="#f8f8f9"/>
<rect x="1359.79" y="823.40" width="13.05" height="25.70" rx="2.3" fill="#2b6df0"/>
<rect x="1377.93" y="662.10" width="13.05" height="187.00" rx="2.3" fill="#f8f8f9"/>
<rect x="1377.93" y="828.60" width="13.05" height="20.50" rx="2.3" fill="#2b6df0"/>
<rect x="1396.07" y="662.10" width="13.05" height="187.00" rx="2.3" fill="#f8f8f9"/>
<rect x="1396.07" y="834.90" width="13.05" height="14.20" rx="2.3" fill="#2b6df0"/>
<rect x="1414.21" y="662.10" width="13.05" height="187.00" rx="2.3" fill="#f8f8f9"/>
<rect x="1414.21" y="833.90" width="13.05" height="15.20" rx="2.3" fill="#2b6df0"/>
<rect x="1432.35" y="662.10" width="13.05" height="187.00" rx="2.3" fill="#f8f8f9"/>
<rect x="1432.35" y="836.20" width="13.05" height="12.90" rx="2.3" fill="#2b6df0"/>
<rect x="1450.49" y="662.10" width="13.05" height="187.00" rx="2.3" fill="#f8f8f9"/>
<rect x="1450.49" y="827.30" width="13.05" height="21.80" rx="2.3" fill="#2b6df0"/>
<rect x="1468.63" y="662.10" width="13.05" height="187.00" rx="2.3" fill="#f8f8f9"/>
<rect x="1468.63" y="831.00" width="13.05" height="18.10" rx="2.3" fill="#2b6df0"/>
<rect x="1486.77" y="662.10" width="13.05" height="187.00" rx="2.3" fill="#f8f8f9"/>
<rect x="1486.77" y="833.90" width="13.05" height="15.20" rx="2.3" fill="#2b6df0"/>
<rect x="1504.91" y="662.10" width="13.05" height="187.00" rx="2.3" fill="#f8f8f9"/>
<rect x="1504.91" y="837.50" width="13.05" height="11.60" rx="2.3" fill="#2b6df0"/>
<rect x="1523.05" y="662.10" width="13.05" height="187.00" rx="2.3" fill="#f8f8f9"/>
<rect x="1523.05" y="837.50" width="13.05" height="11.60" rx="2.3" fill="#2b6df0"/>
<rect x="1541.19" y="662.10" width="13.05" height="187.00" rx="2.3" fill="#f8f8f9"/>
<rect x="1541.19" y="837.50" width="13.05" height="11.60" rx="2.3" fill="#2b6df0"/>
<rect x="1559.33" y="662.10" width="13.05" height="187.00" rx="2.3" fill="#f8f8f9"/>
<rect x="1559.33" y="837.50" width="13.05" height="11.60" rx="2.3" fill="#2b6df0"/>
<rect x="1577.47" y="662.10" width="13.05" height="187.00" rx="2.3" fill="#f8f8f9"/>
<rect x="1577.47" y="843.80" width="13.05" height="5.30" rx="2.3" fill="#2b6df0"/>
</svg>
<div class="r" style="left:90px;top:90px;width:31px;height:31px;border-radius:7px;background:#fff;box-shadow:0 0 0 1px #e8e8ea inset, 0 1px 1px rgba(0,0,0,.02);"></div>
<svg class="r" style="left:90px;top:90px" width="31" height="31" viewBox="0 0 31 31">
<defs>
<linearGradient id="g1" x1="0" y1="0" x2="1" y2="1"><stop offset="0" stop-color="#4f9bff"/><stop offset="1" stop-color="#2f5cf5"/></linearGradient>
<linearGradient id="g2" x1="0" y1="0" x2="1" y2="1"><stop offset="0" stop-color="#93bdfb"/><stop offset="1" stop-color="#8fa4fb"/></linearGradient>
<linearGradient id="g3" x1="0" y1="0" x2="1" y2="1"><stop offset="0" stop-color="#93c0fb"/><stop offset="1" stop-color="#7f93f8"/></linearGradient>
<linearGradient id="g4" x1="0" y1="0" x2="1" y2="1"><stop offset="0" stop-color="#d3e3fc"/><stop offset="1" stop-color="#bcc8fd"/></linearGradient>
</defs>
<circle cx="10.5" cy="10.5" r="4.5" fill="url(#g1)"/>
<circle cx="20.5" cy="10.5" r="4.5" fill="url(#g2)"/>
<circle cx="10.5" cy="20.5" r="4.5" fill="url(#g3)"/>
<circle cx="20.5" cy="20.5" r="4.5" fill="url(#g4)"/>
</svg>
<div class="t" style="top:97.00px;font-size:15.12px;color:#111;letter-spacing:0.355px;-webkit-text-stroke:0.6px #111;left:130.86px;">Nearby Search</div>
<div class="r" style="left:80.00px;top:131.00px;width:1120.00px;height:1.00px;background:#ececec;"></div>
<svg class="r" style="left:108px;top:152px" width="26" height="24" viewBox="0 0 26 24" fill="none" stroke="#111" stroke-width="1.7">
<rect x="3.4" y="4.2" width="19" height="15.6" rx="2.6"/><line x1="9.9" y1="4.2" x2="9.9" y2="19.8"/></svg>
<div class="t" style="top:156.00px;font-size:16.86px;color:#111;letter-spacing:0.358px;-webkit-text-stroke:0.5px #111;left:162.62px;">All</div>
<svg class="r" style="left:190px;top:158px" width="14" height="12" viewBox="0 0 14 12" fill="none" stroke="#858585" stroke-width="1.1" stroke-linecap="round" stroke-linejoin="round">
<path d="M2.6 3.8 L7 8.4 L11.4 3.8"/></svg>
<div class="r" style="left:80.00px;top:194.00px;width:1120.00px;height:1.00px;background:#ececec;"></div>
<div class="t" style="top:218.00px;font-size:12.5px;color:#858585;letter-spacing:0.442px;-webkit-text-stroke:0.15px #858585;left:105.25px;">Date</div>
<div class="t" style="top:218.00px;font-size:12.5px;color:#858585;letter-spacing:0.345px;-webkit-text-stroke:0.15px #858585;left:412.30px;">Detection Rate</div>
<div class="t" style="top:218.00px;font-size:12.5px;color:#858585;letter-spacing:0.348px;-webkit-text-stroke:0.15px #858585;left:719.85px;">Registered Tag</div>
<div class="t" style="top:218.00px;font-size:12.5px;color:#858585;letter-spacing:0.541px;-webkit-text-stroke:0.15px #858585;left:1027.55px;">Detected Tag</div>
<div class="t" style="top:249.00px;font-size:17.71px;color:#111;letter-spacing:0.276px;-webkit-text-stroke:0.42px #111;left:105.62px;">2025.12.08</div>
<div class="t" style="top:249.00px;font-size:17.71px;color:#111;letter-spacing:0.626px;-webkit-text-stroke:0.42px #111;left:412.70px;">80.5%</div>
<div class="t" style="top:249.00px;font-size:17.71px;color:#111;letter-spacing:-0.125px;-webkit-text-stroke:0.42px #111;left:720.36px;">1,287</div>
<div class="t" style="top:249.00px;font-size:17.71px;color:#111;letter-spacing:0.207px;-webkit-text-stroke:0.42px #111;left:1027.66px;">1,244</div>
<div class="r" style="left:386.00px;top:227.00px;width:1.00px;height:41.00px;background:#e9e9e9;"></div>
<div class="r" style="left:694.00px;top:227.00px;width:1.00px;height:41.00px;background:#e9e9e9;"></div>
<div class="r" style="left:1001.00px;top:227.00px;width:1.00px;height:41.00px;background:#e9e9e9;"></div>
<svg class="r" style="left:473.5px;top:257px" width="10" height="11" viewBox="0 0 10 11" fill="none" stroke="#f4705f" stroke-width="1" stroke-linecap="round" stroke-linejoin="round"><path d="M5 0.8 V10 M1 6 L5 10 L9 6"/></svg>
<div class="t" style="top:257.00px;font-size:10.14px;color:#f4705f;letter-spacing:0.229px;-webkit-text-stroke:0.2px #f4705f;left:487.59px;">20.2%</div>
<svg class="r" style="left:771px;top:257px" width="10" height="11" viewBox="0 0 10 11" fill="none" stroke="#22c48f" stroke-width="1" stroke-linecap="round" stroke-linejoin="round"><path d="M5 10.2 V1 M1 5 L5 1 L9 5"/></svg>
<div class="t" style="top:257.00px;font-size:10.14px;color:#22c48f;letter-spacing:-0.005px;-webkit-text-stroke:0.2px #22c48f;left:784.53px;">10.2%</div>
<svg class="r" style="left:1080.6px;top:257px" width="10" height="11" viewBox="0 0 10 11" fill="none" stroke="#22c48f" stroke-width="1" stroke-linecap="round" stroke-linejoin="round"><path d="M5 10.2 V1 M1 5 L5 1 L9 5"/></svg>
<div class="t" style="top:257.00px;font-size:10.14px;color:#22c48f;letter-spacing:0.229px;-webkit-text-stroke:0.2px #22c48f;left:1094.59px;">20.2%</div>
<div class="t" style="top:387.00px;font-size:10px;color:#858585;letter-spacing:0.4px;left:70.60px;width:200px;text-align:center;text-indent:0.4px;">00</div>
<div class="t" style="top:387.00px;font-size:10px;color:#858585;letter-spacing:0.4px;left:130.02px;width:200px;text-align:center;text-indent:0.4px;">01</div>
<div class="t" style="top:387.00px;font-size:10px;color:#858585;letter-spacing:0.4px;left:189.44px;width:200px;text-align:center;text-indent:0.4px;">02</div>
<div class="t" style="top:387.00px;font-size:10px;color:#858585;letter-spacing:0.4px;left:248.85px;width:200px;text-align:center;text-indent:0.4px;">03</div>
<div class="t" style="top:387.00px;font-size:10px;color:#858585;letter-spacing:0.4px;left:308.27px;width:200px;text-align:center;text-indent:0.4px;">04</div>
<div class="t" style="top:387.00px;font-size:10px;color:#858585;letter-spacing:0.4px;left:367.69px;width:200px;text-align:center;text-indent:0.4px;">05</div>
<div class="t" style="top:387.00px;font-size:10px;color:#858585;letter-spacing:0.4px;left:427.11px;width:200px;text-align:center;text-indent:0.4px;">06</div>
<div class="t" style="top:387.00px;font-size:10px;color:#858585;letter-spacing:0.4px;left:486.53px;width:200px;text-align:center;text-indent:0.4px;">07</div>
<div class="t" style="top:387.00px;font-size:10px;color:#858585;letter-spacing:0.4px;left:545.94px;width:200px;text-align:center;text-indent:0.4px;">08</div>
<div class="t" style="top:387.00px;font-size:10px;color:#858585;letter-spacing:0.4px;left:605.36px;width:200px;text-align:center;text-indent:0.4px;">09</div>
<div class="t" style="top:387.00px;font-size:10px;color:#858585;letter-spacing:0.4px;left:664.78px;width:200px;text-align:center;text-indent:0.4px;">10</div>
<div class="t" style="top:387.00px;font-size:10px;color:#858585;letter-spacing:0.4px;left:724.20px;width:200px;text-align:center;text-indent:0.4px;">11</div>
<div class="t" style="top:387.00px;font-size:10px;color:#858585;letter-spacing:0.4px;left:783.62px;width:200px;text-align:center;text-indent:0.4px;">12</div>
<div class="t" style="top:387.00px;font-size:10px;color:#858585;letter-spacing:0.4px;left:843.03px;width:200px;text-align:center;text-indent:0.4px;">13</div>
<div class="t" style="top:387.00px;font-size:10px;color:#858585;letter-spacing:0.4px;left:902.45px;width:200px;text-align:center;text-indent:0.4px;">14</div>
<div class="t" style="top:387.00px;font-size:10px;color:#858585;letter-spacing:0.4px;left:961.87px;width:200px;text-align:center;text-indent:0.4px;">15</div>
<div class="t" style="top:387.00px;font-size:10px;color:#858585;letter-spacing:0.4px;left:1021.29px;width:200px;text-align:center;text-indent:0.4px;">16</div>
<div class="t" style="top:387.00px;font-size:10px;color:#858585;letter-spacing:0.4px;left:1080.71px;width:200px;text-align:center;text-indent:0.4px;">17</div>
<div class="t" style="top:312.00px;font-size:10px;color:#7a7a7a;letter-spacing:0.5px;right:1040.60px;">250</div>
<div class="t" style="top:328.00px;font-size:10px;color:#7a7a7a;letter-spacing:0.5px;right:1040.60px;">200</div>
<div class="t" style="top:344.00px;font-size:10px;color:#7a7a7a;letter-spacing:0.5px;right:1040.60px;">150</div>
<div class="t" style="top:359.00px;font-size:10px;color:#7a7a7a;letter-spacing:0.5px;right:1040.60px;">100</div>
<div class="t" style="top:375.00px;font-size:10px;color:#7a7a7a;letter-spacing:0.5px;right:1040.60px;">50</div>
<div class="t" style="top:390.00px;font-size:10px;color:#7a7a7a;letter-spacing:0.5px;right:1040.60px;">0</div>
<div class="t" style="left:62.5px;top:351px;width:100px;text-align:center;font-size:10.3px;letter-spacing:0.15px;color:#7a7a7a;transform:rotate(-90deg);">Detected Tag</div>
<div class="t" style="top:406.00px;font-size:10px;color:#7a7a7a;letter-spacing:0.35px;left:778.90px;width:200px;text-align:center;">Time</div>
<div class="r" style="left:80.00px;top:428.00px;width:1120.00px;height:1.00px;background:#ebebeb;"></div>
<div class="t" style="top:451.00px;font-size:18.46px;color:#111;letter-spacing:-0.08px;-webkit-text-stroke:0.3px #111;left:126.16px;">Anchor</div>
<div class="t" style="top:451.00px;font-size:18.46px;color:#8a8a8a;letter-spacing:0.215px;-webkit-text-stroke:0.2px #8a8a8a;left:239.59px;">Tag</div>
<div class="r" style="left:80.00px;top:491.00px;width:1120.00px;height:1.00px;background:#ebebeb;"></div>
<div class="t" style="top:515.00px;font-size:17.95px;color:#111;letter-spacing:0.035px;-webkit-text-stroke:0.7px #111;left:152.06px;">TwinTracker BLE 001</div>
<div class="t" style="top:538.00px;font-size:14.76px;color:#888;letter-spacing:0.51px;-webkit-text-stroke:0.15px #888;left:151.94px;">C9:34:6E:BB:06:56</div>
<div class="t" style="top:585.00px;font-size:15.12px;color:#111;letter-spacing:0.391px;-webkit-text-stroke:0.28px #111;left:115.30px;">Device Type</div>
<div class="t" style="top:618.00px;font-size:14.97px;color:#111;letter-spacing:0.42px;-webkit-text-stroke:0.28px #111;left:115.31px;">Location Info</div>
<div class="t" style="top:585.00px;font-size:15.12px;color:#6f6f6f;letter-spacing:0.051px;left:440.77px;">TwinTracker BLE</div>
<div class="t" style="top:618.00px;font-size:14.97px;color:#6f6f6f;letter-spacing:-0.058px;left:439.55px;">U-space 1B · 12F</div>
<div class="t" style="top:854.00px;font-size:10px;color:#bcbcbc;letter-spacing:0.5px;left:135.95px;">00</div>
<div class="t" style="top:854.00px;font-size:10px;color:#bcbcbc;letter-spacing:0.5px;left:172.23px;">02</div>
<div class="t" style="top:854.00px;font-size:10px;color:#bcbcbc;letter-spacing:0.5px;left:208.51px;">04</div>
<div class="t" style="top:854.00px;font-size:10px;color:#bcbcbc;letter-spacing:0.5px;left:244.79px;">06</div>
<div class="t" style="top:854.00px;font-size:10px;color:#bcbcbc;letter-spacing:0.5px;left:281.07px;">08</div>
<div class="t" style="top:854.00px;font-size:10px;color:#bcbcbc;letter-spacing:0.5px;left:317.35px;">10</div>
<div class="t" style="top:854.00px;font-size:10px;color:#bcbcbc;letter-spacing:0.5px;left:353.63px;">12</div>
<div class="t" style="top:854.00px;font-size:10px;color:#bcbcbc;letter-spacing:0.5px;left:389.91px;">14</div>
<div class="t" style="top:854.00px;font-size:10px;color:#bcbcbc;letter-spacing:0.5px;left:426.19px;">16</div>
<div class="t" style="top:854.00px;font-size:10px;color:#bcbcbc;letter-spacing:0.5px;left:462.47px;">18</div>
<div class="t" style="top:854.00px;font-size:10px;color:#bcbcbc;letter-spacing:0.5px;left:498.75px;">20</div>
<div class="t" style="top:854.00px;font-size:10px;color:#bcbcbc;letter-spacing:0.5px;left:535.03px;">22</div>
<div class="t" style="top:664.00px;font-size:10px;color:#bcbcbc;letter-spacing:0.5px;right:1071.10px;">25</div>
<div class="t" style="top:699.00px;font-size:10px;color:#bcbcbc;letter-spacing:0.5px;right:1071.10px;">20</div>
<div class="t" style="top:735.00px;font-size:10px;color:#bcbcbc;letter-spacing:0.5px;right:1071.10px;">15</div>
<div class="t" style="top:770.00px;font-size:10px;color:#bcbcbc;letter-spacing:0.5px;right:1071.10px;">10</div>
<div class="t" style="top:805.00px;font-size:10px;color:#bcbcbc;letter-spacing:0.5px;right:1071.10px;">5</div>
<div class="t" style="top:840.00px;font-size:10px;color:#bcbcbc;letter-spacing:0.5px;right:1071.10px;">0</div>
<div class="r" style="left:591.00px;top:492.00px;width:1.00px;height:386.00px;background:#ececec;"></div>
<div class="t" style="top:515.00px;font-size:17.95px;color:#111;letter-spacing:0.215px;-webkit-text-stroke:0.7px #111;left:664.06px;">TwinTracker BLE 002</div>
<div class="t" style="top:538.00px;font-size:14.76px;color:#888;letter-spacing:0.681px;-webkit-text-stroke:0.15px #888;left:663.46px;">D9:34:6E:B4:06:54</div>
<div class="t" style="top:585.00px;font-size:15.12px;color:#111;letter-spacing:0.391px;-webkit-text-stroke:0.28px #111;left:627.30px;">Device Type</div>
<div class="t" style="top:618.00px;font-size:14.97px;color:#111;letter-spacing:0.42px;-webkit-text-stroke:0.28px #111;left:627.31px;">Location Info</div>
<div class="t" style="top:585.00px;font-size:15.12px;color:#6f6f6f;letter-spacing:0.051px;left:952.77px;">TwinTracker BLE</div>
<div class="t" style="top:618.00px;font-size:14.97px;color:#6f6f6f;letter-spacing:-0.058px;left:951.55px;">U-space 1B · 12F</div>
<div class="t" style="top:854.00px;font-size:10px;color:#bcbcbc;letter-spacing:0.5px;left:647.95px;">00</div>
<div class="t" style="top:854.00px;font-size:10px;color:#bcbcbc;letter-spacing:0.5px;left:684.23px;">02</div>
<div class="t" style="top:854.00px;font-size:10px;color:#bcbcbc;letter-spacing:0.5px;left:720.51px;">04</div>
<div class="t" style="top:854.00px;font-size:10px;color:#bcbcbc;letter-spacing:0.5px;left:756.79px;">06</div>
<div class="t" style="top:854.00px;font-size:10px;color:#bcbcbc;letter-spacing:0.5px;left:793.07px;">08</div>
<div class="t" style="top:854.00px;font-size:10px;color:#bcbcbc;letter-spacing:0.5px;left:829.35px;">10</div>
<div class="t" style="top:854.00px;font-size:10px;color:#bcbcbc;letter-spacing:0.5px;left:865.63px;">12</div>
<div class="t" style="top:854.00px;font-size:10px;color:#bcbcbc;letter-spacing:0.5px;left:901.91px;">14</div>
<div class="t" style="top:854.00px;font-size:10px;color:#bcbcbc;letter-spacing:0.5px;left:938.19px;">16</div>
<div class="t" style="top:854.00px;font-size:10px;color:#bcbcbc;letter-spacing:0.5px;left:974.47px;">18</div>
<div class="t" style="top:854.00px;font-size:10px;color:#bcbcbc;letter-spacing:0.5px;left:1010.75px;">20</div>
<div class="t" style="top:854.00px;font-size:10px;color:#bcbcbc;letter-spacing:0.5px;left:1047.03px;">22</div>
<div class="t" style="top:664.00px;font-size:10px;color:#bcbcbc;letter-spacing:0.5px;right:559.10px;">25</div>
<div class="t" style="top:699.00px;font-size:10px;color:#bcbcbc;letter-spacing:0.5px;right:559.10px;">20</div>
<div class="t" style="top:735.00px;font-size:10px;color:#bcbcbc;letter-spacing:0.5px;right:559.10px;">15</div>
<div class="t" style="top:770.00px;font-size:10px;color:#bcbcbc;letter-spacing:0.5px;right:559.10px;">10</div>
<div class="t" style="top:805.00px;font-size:10px;color:#bcbcbc;letter-spacing:0.5px;right:559.10px;">5</div>
<div class="t" style="top:840.00px;font-size:10px;color:#bcbcbc;letter-spacing:0.5px;right:559.10px;">0</div>
<div class="r" style="left:1103.00px;top:492.00px;width:1.00px;height:386.00px;background:#ececec;"></div>
<div class="t" style="top:515.00px;font-size:17.95px;color:#111;letter-spacing:0.208px;-webkit-text-stroke:0.7px #111;left:1176.06px;">TwinTracker BLE 003</div>
<div class="t" style="top:538.00px;font-size:14.76px;color:#888;letter-spacing:0.541px;-webkit-text-stroke:0.15px #888;left:1175.94px;">C9:34:6E:BB:06:58</div>
<div class="t" style="top:585.00px;font-size:15.12px;color:#111;letter-spacing:0.391px;-webkit-text-stroke:0.28px #111;left:1139.30px;">Device Type</div>
<div class="t" style="top:618.00px;font-size:14.97px;color:#111;letter-spacing:0.42px;-webkit-text-stroke:0.28px #111;left:1139.31px;">Location Info</div>
<div class="t" style="top:585.00px;font-size:15.12px;color:#6f6f6f;letter-spacing:0.051px;left:1464.77px;">TwinTracker BLE</div>
<div class="t" style="top:618.00px;font-size:14.97px;color:#6f6f6f;letter-spacing:-0.058px;left:1463.55px;">U-space 1B · 12F</div>
<div class="t" style="top:854.00px;font-size:10px;color:#bcbcbc;letter-spacing:0.5px;left:1159.95px;">00</div>
<div class="t" style="top:664.00px;font-size:10px;color:#bcbcbc;letter-spacing:0.5px;right:47.10px;">25</div>
<div class="t" style="top:699.00px;font-size:10px;color:#bcbcbc;letter-spacing:0.5px;right:47.10px;">20</div>
<div class="t" style="top:735.00px;font-size:10px;color:#bcbcbc;letter-spacing:0.5px;right:47.10px;">15</div>
<div class="t" style="top:770.00px;font-size:10px;color:#bcbcbc;letter-spacing:0.5px;right:47.10px;">10</div>
<div class="t" style="top:805.00px;font-size:10px;color:#bcbcbc;letter-spacing:0.5px;right:47.10px;">5</div>
<div class="t" style="top:840.00px;font-size:10px;color:#bcbcbc;letter-spacing:0.5px;right:47.10px;">0</div>
<div class="r" style="left:1615.00px;top:492.00px;width:1.00px;height:386.00px;background:#ececec;"></div>
</div>
<svg class="r" style="left:0;top:0" width="1200" height="880" viewBox="0 0 1200 880"><path fill-rule="evenodd" fill="#f0f2f6" d="M0.00 24.30 L0.20 22.86 L0.78 20.80 L1.75 18.48 L3.06 16.03 L4.69 13.54 L6.61 11.09 L8.76 8.76 L11.09 6.61 L13.54 4.69 L16.03 3.06 L18.48 1.75 L20.80 0.78 L22.86 0.20 L24.30 0.00 L1175.70 0.00 L1177.14 0.20 L1179.20 0.78 L1181.52 1.75 L1183.97 3.06 L1186.46 4.69 L1188.91 6.61 L1191.24 8.76 L1193.39 11.09 L1195.31 13.54 L1196.94 16.03 L1198.25 18.48 L1199.22 20.80 L1199.80 22.86 L1200.00 24.30 L1200.00 855.70 L1199.80 857.14 L1199.22 859.20 L1198.25 861.52 L1196.94 863.97 L1195.31 866.46 L1193.39 868.91 L1191.24 871.24 L1188.91 873.39 L1186.46 875.31 L1183.97 876.94 L1181.52 878.25 L1179.20 879.22 L1177.14 879.80 L1175.70 880.00 L24.30 880.00 L22.86 879.80 L20.80 879.22 L18.48 878.25 L16.03 876.94 L13.54 875.31 L11.09 873.39 L8.76 871.24 L6.61 868.91 L4.69 866.46 L3.06 863.97 L1.75 861.52 L0.78 859.20 L0.20 857.14 L0.00 855.70 Z M0.00 22.60 L0.18 21.26 L0.73 19.35 L1.62 17.19 L2.85 14.91 L4.37 12.59 L6.15 10.32 L8.15 8.15 L10.32 6.15 L12.59 4.37 L14.91 2.85 L17.19 1.62 L19.35 0.73 L21.26 0.18 L22.60 0.00 L1175.40 0.00 L1176.74 0.18 L1178.65 0.73 L1180.81 1.62 L1183.09 2.85 L1185.41 4.37 L1187.68 6.15 L1189.85 8.15 L1191.85 10.32 L1193.63 12.59 L1195.15 14.91 L1196.38 17.19 L1197.27 19.35 L1197.82 21.26 L1198.00 22.60 L1198.00 855.40 L1197.82 856.74 L1197.27 858.65 L1196.38 860.81 L1195.15 863.09 L1193.63 865.41 L1191.85 867.68 L1189.85 869.85 L1187.68 871.85 L1185.41 873.63 L1183.09 875.15 L1180.81 876.38 L1178.65 877.27 L1176.74 877.82 L1175.40 878.00 L22.60 878.00 L21.26 877.82 L19.35 877.27 L17.19 876.38 L14.91 875.15 L12.59 873.63 L10.32 871.85 L8.15 869.85 L6.15 867.68 L4.37 865.41 L2.85 863.09 L1.62 860.81 L0.73 858.65 L0.18 856.74 L0.00 855.40 Z"/></svg>
</div>
</body></html>
